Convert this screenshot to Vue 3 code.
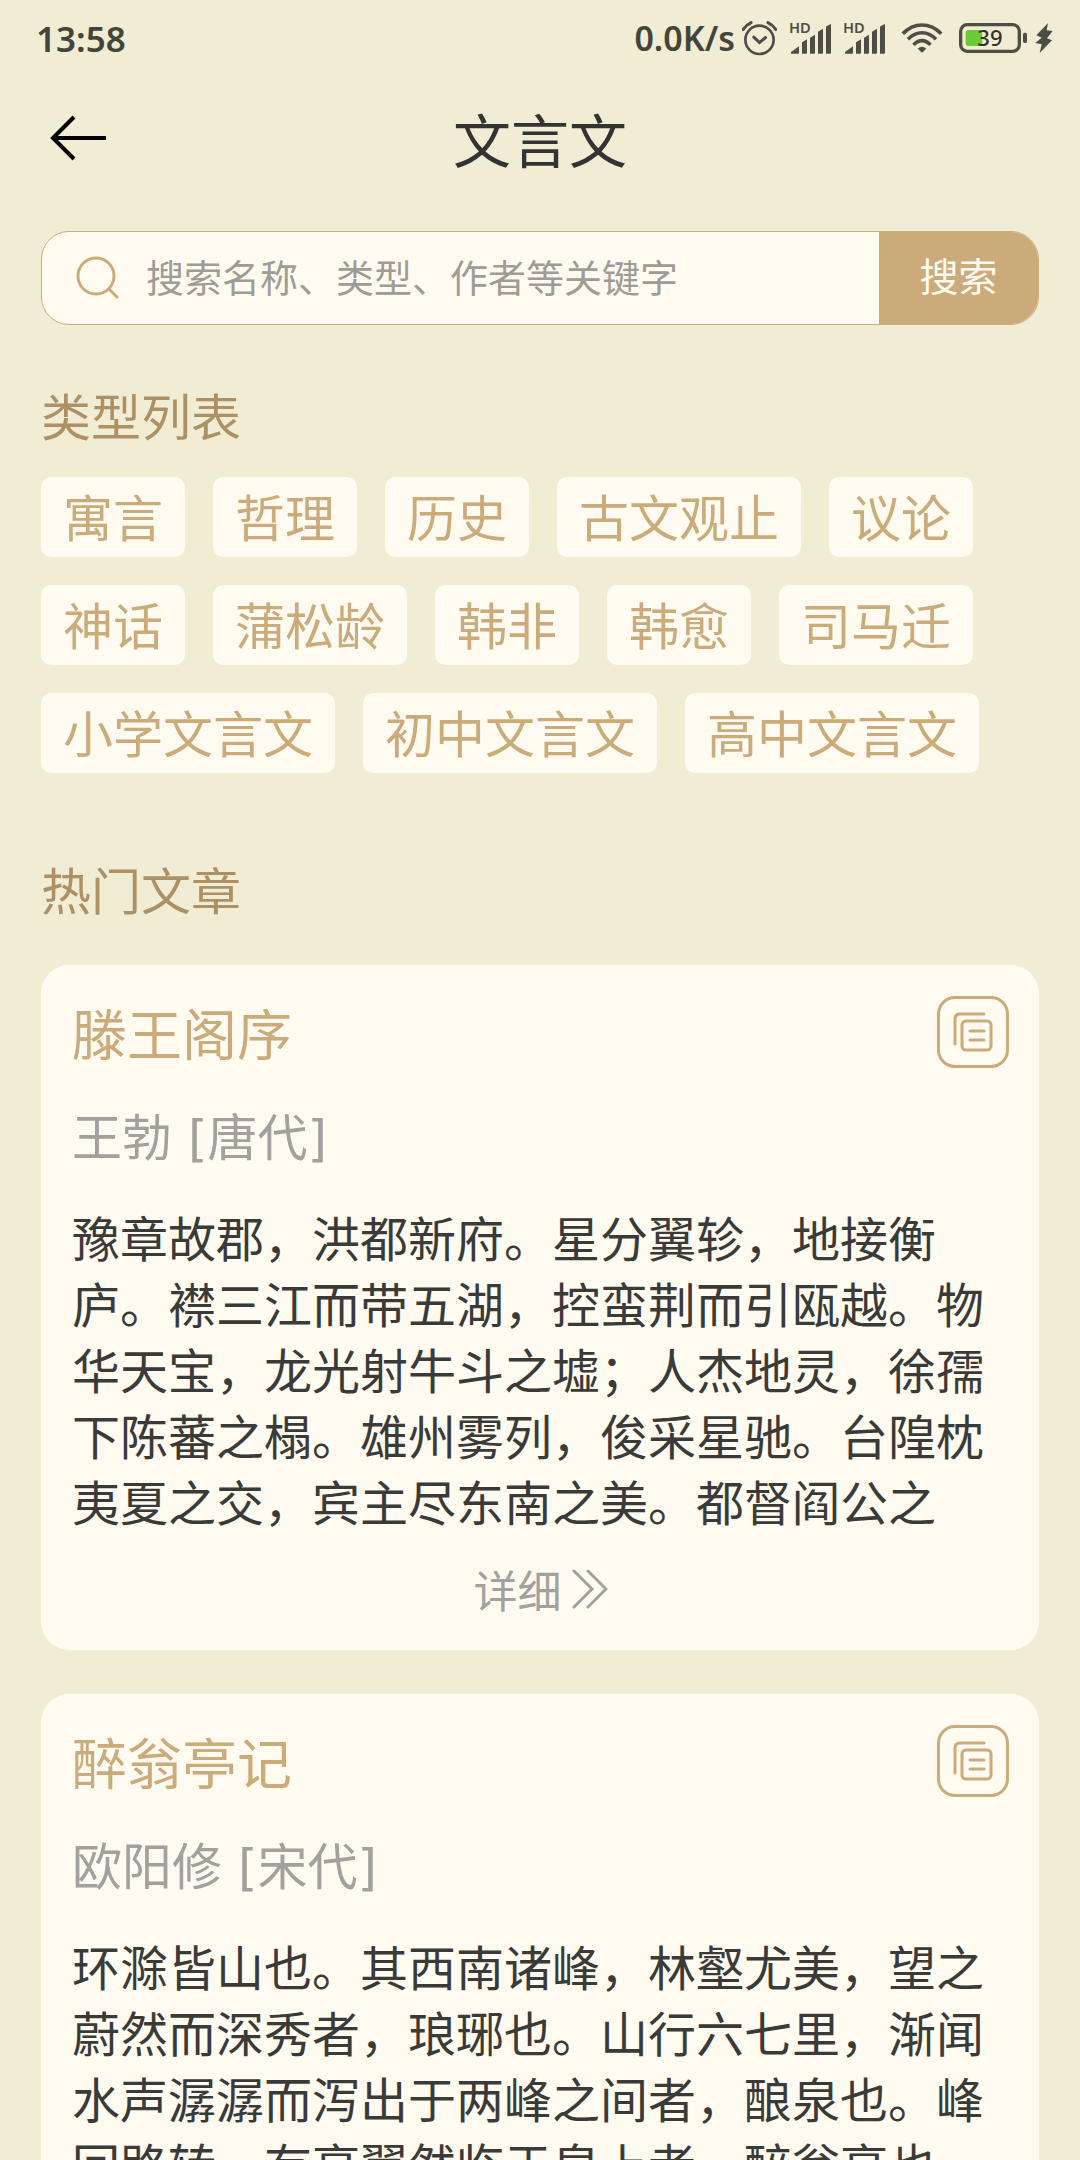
<template>
  <div class="page">
    <div class="status-bar">
      <span class="clock">13:58</span>
      <div class="status-icons">
        <span class="speed">0.0K/s</span>
        <svg class="alarm" viewBox="0 0 104 104" fill="none" stroke="currentColor" stroke-width="8" stroke-linecap="round">
          <circle cx="52" cy="56" r="42" />
          <path d="M35 48L52 64L70 49" stroke-width="9" />
          <path d="M4 25Q12 12 27 5M100 25Q92 12 77 5" stroke-width="9" />
        </svg>
        <svg v-for="n in 2" :key="n" class="signal" viewBox="0 0 123 93" fill="currentColor">
          <text x="-3" y="31" class="hd">HD</text>
          <path d="M3 92V87L27 70V89Q27 92 24 92Z" />
          <path d="M36 92V58L51 49V89Q51 92 48 92Z" />
          <path d="M60 92V44L75 35V89Q75 92 72 92Z" />
          <path d="M84 92V26L99 17V89Q99 92 96 92Z" />
          <path d="M108 92V12Q108 9 123 3V89Q123 92 120 92Z" />
        </svg>
        <svg class="wifi" viewBox="0 0 126 92" fill="none" stroke="currentColor" stroke-width="11">
          <path d="M4 33Q30 6 63 6T122 33" />
          <path d="M20 50Q40 30 63 30T106 50" />
          <path d="M37 67Q49 54 63 54T89 67" />
          <path d="M50 78Q63 67 76 78L66 89Q63 92 60 89Z" fill="currentColor" stroke="none" />
        </svg>
        <svg class="battery" viewBox="0 0 204 90">
          <rect x="5" y="5" width="176" height="80" rx="20" fill="none" stroke="currentColor" stroke-width="10" />
          <rect x="20" y="21" width="50" height="48" rx="8" fill="#6ccb36" />
          <rect x="192" y="29" width="12" height="31" rx="5" fill="currentColor" />
          <text x="55" y="70" class="level">39</text>
        </svg>
        <svg class="bolt" viewBox="0 0 54 90" fill="currentColor"><path d="M39 0L4 37L20 44L1 60L20 64L14 90L51 52L36 46L53 24L35 22Z" /></svg>
      </div>
    </div>

    <header class="nav">
      <button class="back" aria-label="返回" @click="back">
        <svg viewBox="0 0 56 46" fill="none" stroke="currentColor" stroke-width="4"><path d="M24 2L3 23L24 44M3 23H56" /></svg>
      </button>
      <h1>文言文</h1>
    </header>

    <main>
      <form class="search" @submit.prevent>
        <svg viewBox="0 0 44 44" fill="none" stroke="currentColor" stroke-width="3" stroke-linecap="round"><circle cx="20" cy="20" r="18" /><path d="M33 33L41 41" /></svg>
        <input v-model="keyword" type="text" aria-label="搜索" placeholder="搜索名称、类型、作者等关键字" />
        <button type="submit">搜索</button>
      </form>

      <h2>类型列表</h2>
      <div class="tags">
        <button v-for="t in types" :key="t" type="button">{{ t }}</button>
      </div>

      <h2>热门文章</h2>
      <div class="articles">
        <article v-for="a in articles" :key="a.title" class="card">
          <div class="card-head">
            <h3>{{ a.title }}</h3>
            <button class="copy" aria-label="复制" @click="copy(a)">
              <svg viewBox="0 0 40 40" fill="none" stroke="currentColor" stroke-width="3" stroke-linecap="round">
                <path d="M2 32V7Q2 2 7 2H31" />
                <rect x="9" y="9" width="29" height="29" rx="4" />
                <path d="M17 19H31M17 28H31" />
              </svg>
            </button>
          </div>
          <p class="author">{{ a.author }} [{{ a.dynasty }}]</p>
          <p class="content">{{ a.content }}</p>
          <a class="more" href="#">
            详细
            <svg viewBox="0 0 36 40" fill="none" stroke="currentColor" stroke-width="3" stroke-linecap="round"><path d="M2 2L20 20L2 38M16 2L34 20L16 38" /></svg>
          </a>
        </article>
      </div>
    </main>
  </div>
</template>

<script setup>
import { ref } from 'vue'

const keyword = ref('')
const types = ['寓言', '哲理', '历史', '古文观止', '议论', '神话', '蒲松龄', '韩非', '韩愈', '司马迁', '小学文言文', '初中文言文', '高中文言文']
const articles = [
  {
    title: '滕王阁序',
    author: '王勃',
    dynasty: '唐代',
    content: '豫章故郡，洪都新府。星分翼轸，地接衡庐。襟三江而带五湖，控蛮荆而引瓯越。物华天宝，龙光射牛斗之墟；人杰地灵，徐孺下陈蕃之榻。雄州雾列，俊采星驰。台隍枕夷夏之交，宾主尽东南之美。都督阎公之',
  },
  {
    title: '醉翁亭记',
    author: '欧阳修',
    dynasty: '宋代',
    content: '环滁皆山也。其西南诸峰，林壑尤美，望之蔚然而深秀者，琅琊也。山行六七里，渐闻水声潺潺而泻出于两峰之间者，酿泉也。峰回路转，有亭翼然临于泉上者，醉翁亭也。',
  },
]

function back() {
  window.history.back()
}
function copy(a) {
  navigator.clipboard?.writeText(a.content)
}
</script>

<style>
body{margin:0;background:#f1ecd4}
</style>
<style scoped>
.page{height:100vh;overflow:hidden;display:flex;flex-direction:column;background:#f1ecd4;color:#3a3a38;font-family:"Noto Sans CJK SC",sans-serif}
h1,h2,h3,p{margin:0;font-weight:400}
button,input{font-family:inherit;border:none;padding:0;margin:0}
button{cursor:pointer}
svg{display:block;flex:none}

.status-bar{flex:none;height:76px;padding:0 27px 0 36px;display:flex;align-items:center;justify-content:space-between;font-family:"Noto Sans",sans-serif;font-weight:600;color:#45443a}
.clock{font-size:35px}
.status-icons{display:flex;align-items:center;gap:13px;color:#4f4e44}
.speed{font-size:34px;color:#45443a;margin-right:-6px}
.alarm{width:35px;height:35px}
.signal{width:41px;height:31px;overflow:visible}
.hd{font-size:44px}
.wifi{width:42px;height:30px;margin:0 3px}
.battery{width:68px;height:30px}
.level{font-size:66px;font-weight:500;fill:#33332c}
.bolt{width:18px;height:30px;margin-left:-5px}

.nav{flex:none;height:124px;display:grid;grid-template-columns:1fr auto 1fr;align-items:center;padding:0 50px}
.nav h1{font-size:58px;line-height:72px;color:#333}
.back{justify-self:start;background:none;color:#000}
.back svg{width:56px;height:46px}

main{flex:1;min-height:0;overflow-y:auto;scrollbar-width:none;padding:31px 41px 44px}
.search{display:flex;align-items:stretch;height:92px;border:1px solid #ccab7b;border-radius:28px;background:#fffbf0;overflow:hidden}
.search svg{width:44px;height:44px;margin:auto 0 auto 34px;color:#ccab7b}
.search input{flex:1;min-width:0;margin-left:26px;padding-bottom:6px;background:none;outline:none;font-size:38px;color:#3a3a38}
.search input::placeholder{color:#9f9c95;opacity:1}
.search button{width:159px;padding-bottom:8px;background:#ccab7b;color:#fffbf0;font-size:39px}

h2{font-size:50px;line-height:72px;color:#ae9065}
.search + h2{margin-top:53px}
.tags{display:flex;flex-wrap:wrap;gap:28px;margin:27px 0 79px}
.tags button{height:80px;padding:0 22px 4px;border-radius:10px;background:#fffbf0;color:#ccab7b;font-size:50px;line-height:76px}

.articles{display:flex;flex-direction:column;gap:44px;margin-top:41px}
.card{background:#fffbf0;border-radius:28px;padding:31px 30px 29px 31px}
.card-head{display:flex;align-items:flex-start;justify-content:space-between}
.card-head h3{font-size:55px;line-height:70px;color:#ccab7b}
.copy{width:72px;height:72px;display:flex;align-items:center;justify-content:center;border:3px solid #ccab7b;border-radius:18px;background:none;color:#ccab7b}
.copy svg{width:40px;height:40px}
.author{margin-top:35px;font-family:"DejaVu Sans","Noto Sans CJK SC",sans-serif;font-size:50px;line-height:72px;color:#a3a19d}
.content{margin-top:28px;font-size:48px;line-height:66px}
.more{display:flex;align-items:center;justify-content:center;gap:10px;margin-top:26px;font-size:44px;line-height:60px;color:#a3a19d;text-decoration:none}
.more svg{width:36px;height:40px}
.card{padding-bottom:31px}
</style>
